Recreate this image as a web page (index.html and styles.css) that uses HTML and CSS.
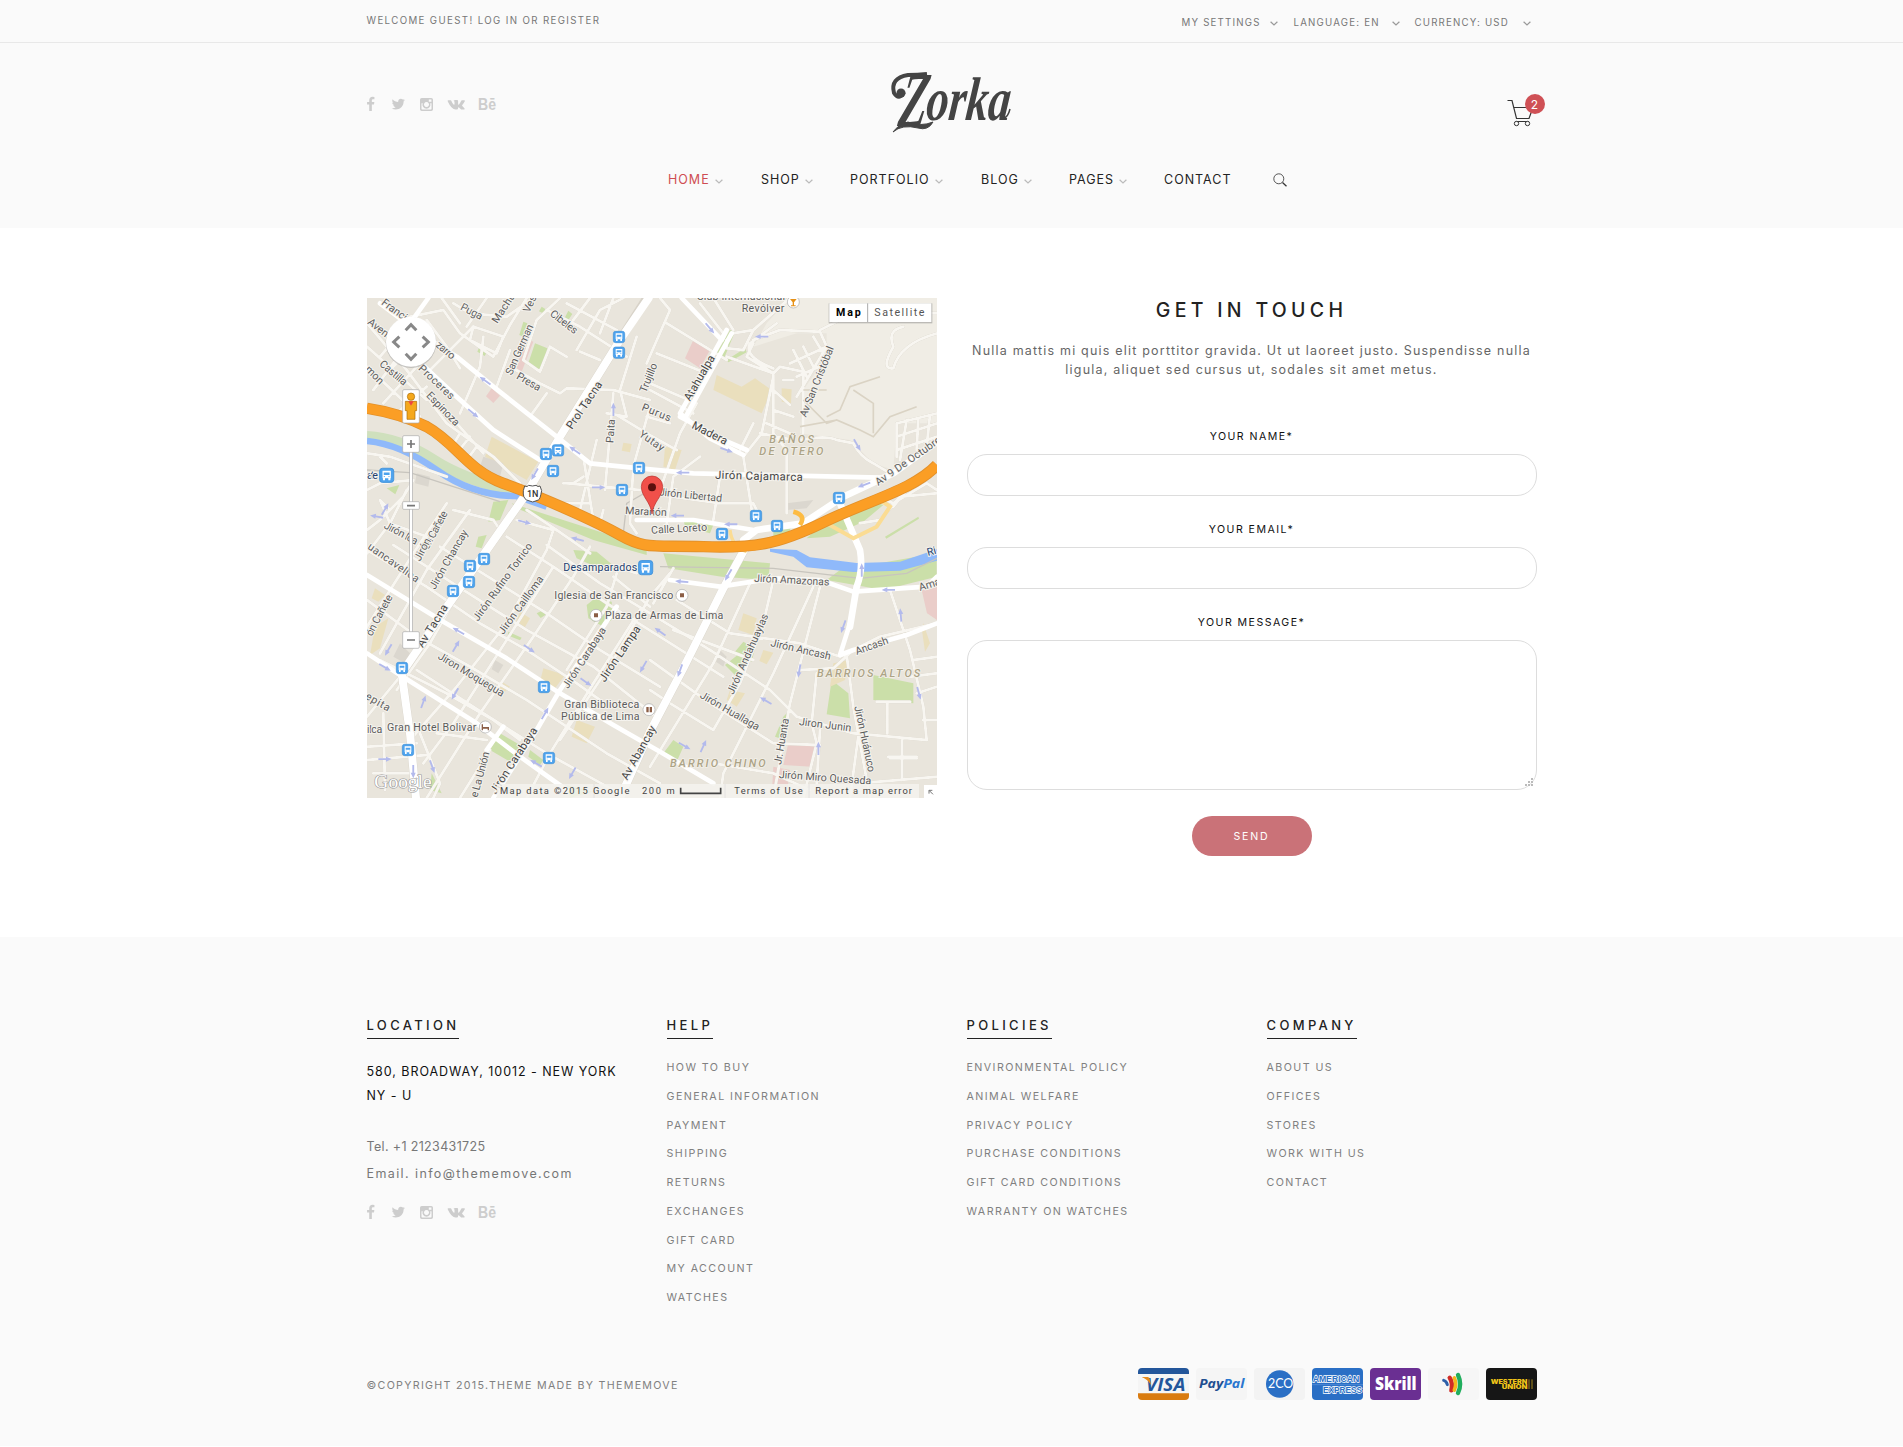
FILE: index.html
```html
<!DOCTYPE html>
<html lang="en">
<head>
<meta charset="utf-8">
<title>Zorka - Contact</title>
<link rel="stylesheet" href="styles.css">
</head>
<body>
<svg class="defs" width="0" height="0" aria-hidden="true">
  <defs>
    <symbol id="chev" viewBox="0 0 8 5"><path d="M.6.7 4 4 7.4.7" fill="none" stroke="currentColor" stroke-width="1.200"/></symbol>
    <symbol id="social" viewBox="0 0 130 16">
      <path transform="translate(-4 .8) scale(.0085)" d="M1343 12v264h-157q-86 0-116 36t-30 108v189h293l-39 296h-254v759h-306v-759h-255v-296h255v-218q0-186 104-288.5t277-102.5q147 0 228 12z"/>
      <path transform="translate(23.800 .6) scale(.0084)" d="M1684 408q-67 98-162 167 1 14 1 42 0 130-38 259.5t-115.5 248.5-184.5 210.5-258 146-323 54.5q-271 0-496-145 35 4 78 4 225 0 401-138-105-2-188-64.5t-114-159.5q33 5 61 5 43 0 85-11-112-23-185.500-111.500t-73.500-205.500v-4q68 38 146 41-66-44-105-115t-39-154q0-88 44-163 121 149 294.500 238.500t371.500 99.500q-8-38-8-74 0-134 94.500-228.500t228.500-94.500q140 0 236 102 109-21 205-78-37 115-142 178 93-10 186-50z"/>
      <path fill-rule="evenodd" d="M54.700 2h9.600q1.700 0 1.700 1.700v9.600q0 1.700-1.700 1.700h-9.600q-1.700 0-1.700-1.700V3.700Q53 2 54.700 2zM54.500 7.300v5.500q0 .7.700.7h8.600q.7 0 .7-.7V7.300h-1.300a4 4 0 1 1-7.500 0zM59.500 6a2.500 2.500 0 1 0 .01 0zM61.800 3.500v2.200h2.600V3.500z"/>
      <path d="M81 4.300h2.700q.5 0 .7.600 1.200 3 2.400 3.900.7.300.7-.7V6q0-1-.9-1.200.5-.8 1.800-.8h1.700q1 0 1 1v3.100q.2.900.9.300 1.300-1.400 2.100-3.400.2-.7.900-.7h2.200q1 0 .6.900-.8 1.800-2.500 3.700-.5.600 0 1.100l2.100 2.200q1 1.200-.6 1.300h-2.100q-.6 0-1.100-.5l-1.600-1.600q-.9-.6-.9.700 0 1.300-.9 1.400h-1.500q-4.300-.2-7.900-8.100-.3-1 .2-1.100z"/>
      <text x="111" y="13.500" class="be" textLength="18" lengthAdjust="spacingAndGlyphs">Bē</text>
    </symbol>
    <g id="bus"><rect x="-17" y="-17" width="34" height="34" rx="7" fill="#4ea3ee" stroke="#3d8fd8" stroke-width="2"/><path d="M-10-11h20v18h-20zM-9 7h5v5h-5zM4 7h5v5h-5z" fill="#fff"/><path d="M-7-7H7v6H-7zM-7 2h3v2h-3zM4 2h3v2H4z" fill="#4ea3ee"/></g>
    <path id="arr" d="M-20-2.500H3V-7L20 0 3 8V3H-20z" fill="#b3baec"/>
  </defs>
</svg>

<div class="topbar">
  <div class="container topbar-row">
    <div class="welcome">WELCOME GUEST! LOG IN OR REGISTER</div>
    <div class="settings">
      <span>MY SETTINGS</span><svg><use href="#chev"/></svg>
      <span>LANGUAGE: EN</span><svg><use href="#chev"/></svg>
      <span>CURRENCY: USD</span><svg><use href="#chev"/></svg>
    </div>
  </div>
</div>

<header class="header">
  <div class="container header-row">
    <svg class="social"><use href="#social"/></svg>
    <svg class="logo" viewBox="0 0 124 64" aria-label="Zorka">
      <g class="logo-text">
        <text x="0" y="0" transform="translate(7 55) skewX(-9) scale(.58 1)" class="logo-z">Z</text>
        <text x="0" y="0" transform="translate(35 48.500) skewX(-6) scale(1 1.080)" class="logo-rest" textLength="84" lengthAdjust="spacingAndGlyphs">orka</text>
      </g>
      <path d="M14 21Q9 30 4 22 0 7 18 4 28 4 37 3" fill="none" stroke="#444" stroke-width="4"/>
      <circle cx="11" cy="22" r="4.500" fill="#444"/>
      <path d="M3 61Q9 53 18 51 31 56 43 51 38 60 28 57 12 53 3 61z" fill="#444" stroke="#444"/>
      <path d="M114 47q4-1 6-9" fill="none" stroke="#444" stroke-width="1.500"/>
    </svg>
    <div class="cart">
      <svg width="27" height="28" viewBox="0 0 27 28"><path d="M.5 1.500H5L9.500 19.500H22L26 8.500H6.500M9 22.500h13" fill="none" stroke="#333" stroke-width="1.200"/><circle cx="9.500" cy="24.500" r="2.200" fill="#fafafa" stroke="#333"/><circle cx="20.500" cy="24.500" r="2.200" fill="#fafafa" stroke="#333"/></svg>
      <span class="badge">2</span>
    </div>
  </div>
  <nav class="nav">
    <a class="active">HOME<svg><use href="#chev"/></svg></a>
    <a>SHOP<svg><use href="#chev"/></svg></a>
    <a>PORTFOLIO<svg><use href="#chev"/></svg></a>
    <a>BLOG<svg><use href="#chev"/></svg></a>
    <a>PAGES<svg><use href="#chev"/></svg></a>
    <a>CONTACT</a>
    <svg class="search" viewBox="0 0 14 14"><circle cx="5.800" cy="5.800" r="5" fill="none" stroke="#555"/><path d="m9.500 9.500 4 3.700" stroke="#333" stroke-width="1.300"/></svg>
  </nav>
</header>

<main class="container main">
  <svg class="map" viewBox="21 24 1710 1500">
    <rect x="21" y="24" width="1710" height="1500" fill="#e9e5dc"/>
    <path d="M1290 24H1731V400L1610 400 1600 540 1540 520 1470 450 1320 430 1330 300 1400 200 1400 130 1310 130 1180 170 1220 100z" fill="#f0ede5"/>
    <g fill="#cbdfa9">
      <path d="M525 160 562 175 545 245 503 225zM360 165 384 180 374 198 352 185zM490 95l12 5-12 40-12-5zM625 62l12 10-12 18-10-8zM545 50l12 8-8 12-12-6zM80 595l38-10-12 28zM400 635 445 630 420 690 385 695zM355 740l25-5-15 40-18-5z"/>
      <path d="M455 640 640 700 860 770 860 795 700 750 470 655zM910 790l320 30-5 50-140-10-160-25zM1440 840l290-50v70l-160 40-170-30zM640 780l70 5 60 50-30 10-90-40z"/>
      <path d="M680 945l25-20 50 10 5 50-30 25-45-25zM420 1330l60 35-30 50-60-35zM1125 1085l25-30 35 20-10 40zM1095 1125l50-40 20 30-35 45zM1540 1155l120 25v60l-120-10zM1415 1170l50 40 5 75-70-12zM1270 1280l10-10-5 80-30-10zM940 1350l30 20-20 45-40-25z"/>
      <path d="M1110 120 1125 125 1090 210 1070 190zM1100 210l55-35 5 12-55 30zM1240 715l60-20-20 50-40 5zM970 685l90 20-10 25-75-20zM1400 690l80-30 60-25 30 10-60 50-100 45-70 5zM1575 740l100-60 2 6-98 60zM620 1485l80 20-70 19zM510 1380l40 30-10 15-35-25zM215 1450l30 60-35-10zM530 970l15-8 12 12-15 10zM445 1025l40 18-5 8-37-15z"/>
    </g>
    <g fill="#eacdc9"><path d="M495 145 520 155 485 245 470 235zM395 295l25 22-20 22-22-20zM1000 150l50 30-30 55-45-30zM1285 1360l80 10-10 60-85-5zM1240 1430l50 10-8 60-45-15zM1685 900l46-10v100l-30-20z"/></g>
    <g fill="#eadfbd"><path d="M395 440 535 515 500 570 375 500zM1070 255 1145 290 1185 265 1235 300 1205 370 1060 300zM790 458l25 4-5 25-25-5zM915 470l50 10-20 60-35-10zM1265 295l30 3-2 42-28-5zM45 1010l40-25-25 90-30 20zM480 965l30 20-20 35-25-18zM550 1135l65 20-30 40-45-20zM650 1290l55 20-25 50-45-20zM1150 970l40 15-10 50-45-15zM1210 1080l30 8-20 35-22-10zM1110 1200l45 10-25 40-30-20zM1420 1120l45-10-10 60-45 20zM425 1175l25 15-15 15-20-10zM45 895l30 20-20 20-20-10zM1690 1000l20 60-15 25-10-70z"/></g>
    <g fill="#dbd7cf"><path d="M370 500 430 520 420 560 360 530zM170 550l40 10-5 30-40-10zM120 1060l30 30-15 30-35-20zM405 1110l25 15-15 25-20-12zM1080 1080l20 20-10 30-22-15zM1280 640l80-10-20 25-60 5z"/></g>
    <path d="M21 440Q120 445 220 510T480 605" fill="none" stroke="#cfe0bd" stroke-width="34"/>
    <path d="M21 453Q120 462 230 540T470 618L560 650" fill="none" stroke="#8fb9fa" stroke-width="20"/>
    <path d="M1230 776 1310 780 1350 802 1490 819 1620 815 1731 778V812L1620 842 1480 846 1340 832 1300 800 1230 785z" fill="#8fb9fa"/>
    <path d="M21 540 150 548 280 590 420 635M900 830 1030 832 1240 835 1500 865 1640 850 1731 805M790 730 800 640 870 600" fill="none" stroke="#c8c5be" stroke-width="4"/>

    <g class="minor-edge">
      <path d="M200 90 260 170 300 235M150 80 250 60 300 130 400 200 450 105 500 24M280 40 330 70 440 80 520 24M340 110 430 140 410 190 330 150zM380 24 320 110M245 24 300 100M450 180 410 290M450 230 540 280 600 310 620 295 760 300 870 330M560 310 510 380M600 24 530 90 490 210 540 245 570 170 620 200M560 60 660 110 800 200M640 90 690 24M720 130 760 24M660 185 720 210M650 180 720 60 790 24M620 40 770 120M830 140 780 300 800 380 740 370M760 310 735 600M870 350 820 530 810 700 830 730M770 375 860 430 950 480M870 300 1000 370M620 580 730 590 840 600 900 600M710 450 660 660M730 660 720 700 780 720M670 500 700 690 M670 560 640 580 610 580 M690 640 610 640"/>
      <path d="M900 24 930 60 860 220M920 100 1100 210M890 190 1040 250M870 280 1010 340 960 430 900 600M860 380 930 400M1120 130 1180 120 1150 180 1100 175 1100 150M1060 24 1120 120M1020 40 1090 130M1100 200 1240 250 1260 230 1330 245 1330 430M1180 160 1160 200 1240 250 1240 430 1280 480 1280 670M1270 270 1300 270M1290 24 1180 120M1250 100 1170 160Q1150 200 1240 235M1180 150 1260 120 1380 125 1400 170 1310 320M1380 120 1480 70 1731 70M1240 360 1300 380M1220 400 1290 430M1200 430 1300 450M1240 300 1290 345M1240 260 1205 430 1150 500 1180 690M1300 180 1340 260M1330 170 1360 230M1360 140 1390 190M1290 220 1400 170M1310 260 1400 220M1180 400 1140 480M1020 500 940 560 920 700M1080 560 1060 690M940 620 1080 640 1180 640 1200 680"/>
      <path d="M1630 110Q1580 120 1600 170 1560 240 1600 235 1620 160 1731 130M1320 450Q1400 435 1430 450L1480 460Q1500 500 1540 520L1590 550M1610 400 1731 370M1610 440 1731 400M1610 480 1731 440M1640 390 1620 510M1675 385 1670 480M1710 375 1700 470M1610 400 1610 500M1560 620 1600 640 1700 580 1731 600M1500 700 1560 690 1620 620 1731 610M1640 600 1600 650"/>
      <path d="M21 100 140 240 260 400 400 500 480 580M21 170 200 330M21 230 180 380M40 300 130 180M70 340 170 230M110 370 200 290M60 200 110 140M100 230 150 180M290 400 370 490M300 430 270 480M330 440 290 490M350 470 320 510M200 250 340 110M370 140 360 230 300 370M21 490 90 500 260 560M60 500 80 520M21 600 60 580 160 570 130 620 60 690 21 720M90 660 60 630 90 700 200 740M140 600 90 700 21 790M280 660 400 690 420 720 300 900 210 1060 110 1200M260 640 160 790 21 1010M330 660 200 840 60 1090M470 690 580 720 560 780 440 1000 290 1190 150 1350M500 660 590 720"/>
      <path d="M21 780 200 890 360 1000 500 1080 650 1180 720 1230M100 765 310 900 500 1020 700 1130 900 1290M240 770 400 870 560 970 720 1080 900 1190M21 930 170 1040 330 1130 500 1230 740 1390 900 1480M60 1110 260 1210 400 1290 480 1350M170 1140 370 1270 560 1390 760 1500M440 740 580 830 740 940 900 1040 1090 1160M560 765 720 880 870 970 1050 1080M690 770 640 860 520 1040 360 1270 200 1524M580 830 440 1050 280 1300 190 1420M840 960 700 1180 570 1390 500 1524M770 850 740 950 620 1140M690 790 590 720M830 850 770 830"/>
      <path d="M930 850 870 920 760 1110 600 1350M940 835 880 940M1170 880 1060 1120 870 1430M1240 870 1210 1000 1140 1180 1060 1320M1360 890 1240 1150 1090 1450 1080 1524M1380 890 1290 1240 1240 1524M1370 1150 1355 1300 1370 1360 1330 1524M950 930 1110 1030 1320 1060 1440 1100 1560 1040 1731 1000M1320 1140 1420 1135 1480 1080M940 1020 1180 1110M870 1110 1050 1240 1240 1360 1380 1365M1050 1080 1230 1200 1310 1280 1480 1330 1700 1350M1060 1320 930 1240 870 1200M1590 900 1650 1080 1690 1250 1700 1350M1660 1110 1731 1100M1670 1210 1731 1190M1690 1290 1731 1290M1550 1235H1650M1582 1240V1330M1585 1400H1670M1626 1350V1470M1590 1405h80M1060 1420 1240 1450 1350 1500M1500 1480 1731 1460M1380 1320 1370 1480M1500 1300 1470 1524M1460 1095 1480 1250 1530 1524M21 1370 170 1360M21 1410 200 1395M70 1270 75 1500M180 1330 240 1480 220 1524M40 1450H160M230 1330 380 1350M21 1280 120 1160M300 1524 390 1380M870 950 760 860M1731 1150 1650 1160"/>
    </g>
    <path d="M1400 380 1440 360 1470 290 1560 260M1330 330 1400 400 1430 390 1500 420 1540 440 1590 380 1670 350M1480 300 1540 340 1540 430M1430 390 1320 410M1400 300 1330 300" fill="none" stroke="#dad3c4" stroke-width="5"/>
    <g fill="none" stroke="#d8d3c9" stroke-width="26" stroke-linejoin="round"><path d="M860 24 780 150 600 440 500 610 240 980 125 1150 150 1330 168 1524M1155 775 1090 895 970 1135 870 1325 780 1524"/></g>
    <g class="major">
      <path stroke-width="24" d="M866 24 780 150 600 440 500 610 240 980 125 1150 150 1330 168 1524M1155 775 1090 895 970 1135 870 1325 780 1524"/>
      <path stroke-width="20" d="M1440 640 1500 780Q1510 840 1490 890L1470 1010M1150 750 1190 720 1330 700 1450 620 1600 550 1731 455"/>
      <path stroke-width="14" d="M205 24 150 100M60 40 180 130 290 200 400 290 590 440 690 520 870 538 1000 550 1560 563M150 190 290 320 400 420 540 510M965 24 1085 150 1100 120 960 370 1050 445 1150 495M1115 130 980 375M960 380 1090 450 1160 480M21 855 250 995 440 1105 600 1210 760 1305 900 1385 1060 1480M21 1090 120 1155 350 1300 480 1400 620 1500M770 950 600 1200 530 1320 400 1524M380 1380 430 1310M930 870 1080 890 1240 865 1380 870 1480 905 1700 890 1731 860M1470 1000 1440 1095 1480 1080 1640 1035 1731 1000M830 690 1000 690 1180 720"/>
    </g>
    <path d="M1560 630Q1480 640 1400 700L1480 745 1550 710 1590 650z" fill="none" stroke="#fbdc93" stroke-width="12"/>
    <path d="M1110 720Q1115 770 1160 785" fill="none" stroke="#fbdc93" stroke-width="10"/>
    <path d="M1300 665Q1340 675 1320 705" fill="none" stroke="#fdbb42" stroke-width="14"/>
    <path d="M21 355Q120 370 200 410C290 460 320 540 430 580S700 690 780 735 880 765 1030 770 1250 765 1390 697 1660 600 1731 525" fill="none" stroke="#e2902a" stroke-width="34"/>
    <path d="M21 355Q120 370 200 410C290 460 320 540 430 580S700 690 780 735 880 765 1030 770 1250 765 1390 697 1660 600 1731 525" fill="none" stroke="#fb9e25" stroke-width="29"/>
    <g>
      <use href="#arr" transform="translate(375 272) rotate(215)"/><use href="#arr" transform="translate(340 370) rotate(40)"/><use href="#arr" transform="translate(524 553) rotate(120)"/><use href="#arr" transform="translate(644 481) rotate(215)"/><use href="#arr" transform="translate(760 358) rotate(-90)"/><use href="#arr" transform="translate(716 592)"/><use href="#arr" transform="translate(494 696) rotate(15)"/><use href="#arr" transform="translate(652 748) rotate(195)"/><use href="#arr" transform="translate(1050 115) rotate(50)"/><use href="#arr" transform="translate(1205 140) rotate(180)"/><use href="#arr" transform="translate(1100 480) rotate(20)"/><use href="#arr" transform="translate(968 548) rotate(180)"/><use href="#arr" transform="translate(1492 465) rotate(60)"/><use href="#arr" transform="translate(1512 585) rotate(160)"/><use href="#arr" transform="translate(952 677) rotate(180)"/><use href="#arr" transform="translate(1112 703) rotate(180)"/><use href="#arr" transform="translate(295 1023) rotate(210)"/><use href="#arr" transform="translate(288 1068) rotate(-60)"/><use href="#arr" transform="translate(508 1076) rotate(35)"/><use href="#arr" transform="translate(85 1080) rotate(120)"/><use href="#arr" transform="translate(75 1132) rotate(30)"/><use href="#arr" transform="translate(285 1212) rotate(120)"/><use href="#arr" transform="translate(190 1235) rotate(-70)"/><use href="#arr" transform="translate(555 1270) rotate(-60)"/><use href="#arr" transform="translate(678 1176) rotate(35)"/><use href="#arr" transform="translate(850 1130) rotate(120)"/><use href="#arr" transform="translate(1105 855) rotate(120)"/><use href="#arr" transform="translate(965 875) rotate(185)"/><use href="#arr" transform="translate(1505 840) rotate(-90)"/><use href="#arr" transform="translate(1585 900) rotate(180)"/><use href="#arr" transform="translate(1450 1010) rotate(110)"/><use href="#arr" transform="translate(1318 1143) rotate(100)"/><use href="#arr" transform="translate(1217 1232) rotate(210)"/><use href="#arr" transform="translate(960 1142) rotate(110)"/><use href="#arr" transform="translate(900 1025) rotate(215)"/><use href="#arr" transform="translate(1375 1375) rotate(-90)"/><use href="#arr" transform="translate(1622 975) rotate(-95)"/><use href="#arr" transform="translate(1677 1210) rotate(75)"/><use href="#arr" transform="translate(974 1368) rotate(30)"/><use href="#arr" transform="translate(1030 1368) rotate(-65)"/><use href="#arr" transform="translate(75 1407)"/><use href="#arr" transform="translate(160 1445) rotate(90)"/><use href="#arr" transform="translate(217 1430) rotate(70)"/><use href="#arr" transform="translate(528 1420) rotate(210)"/><use href="#arr" transform="translate(637 1450) rotate(120)"/><use href="#arr" transform="translate(75 657) rotate(-60)"/><use href="#arr" transform="translate(50 680) rotate(190)"/>
    </g>
    <g class="lbl">
      <text transform="translate(62 42) rotate(36)">Francisco</text><text transform="translate(21 100) rotate(38)">Avenida</text>
      <text transform="translate(173 238) rotate(43)" textLength="135">Proceres</text><text transform="translate(225 168) rotate(40)" textLength="65">zarro</text>
      <text transform="translate(56 225) rotate(40)" textLength="98">Castilla</text><text transform="translate(14 240) rotate(45)" textLength="64">mon</text>
      <text transform="translate(197 318) rotate(46)" textLength="128">Espinoza</text><text transform="translate(299 58) rotate(27)" textLength="70">Puga</text>
      <text transform="translate(412 102) rotate(-57)" textLength="100">Machu</text><text transform="translate(508 70) rotate(-65)">Ves</text>
      <text transform="translate(455 257) rotate(-66)" textLength="162">San German</text><text transform="translate(568 75) rotate(38)" textLength="95">Cibeles</text>
      <text transform="translate(467 265) rotate(30)" textLength="78">Presa</text><text class="big" transform="translate(636 420) rotate(-56)" textLength="165">Prol Tacna</text>
      <text transform="translate(760 460) rotate(-86)" textLength="72">Paita</text><text transform="translate(858 310) rotate(-68)" textLength="92">Trujillo</text>
      <text transform="translate(835 437) rotate(35)" textLength="84">Yutay</text><text transform="translate(843 360) rotate(22)" textLength="92">Purus</text>
      <text class="big" transform="translate(990 335) rotate(-60)" textLength="152">Atahualpa</text><text class="big" transform="translate(993 413) rotate(27)" textLength="115">Madera</text>
      <text class="big" transform="translate(1065 566) rotate(1.500)" textLength="263">Jirón Cajamarca</text><text transform="translate(896 616) rotate(6)" textLength="190">Jirón Libertad</text>
      <text transform="translate(795 672) rotate(3)" textLength="125">Marañón</text><text transform="translate(874 731) rotate(-3)" textLength="168">Calle Loreto</text>
      <text transform="translate(1338 383) rotate(-68)" textLength="225">Av San Cristóbal</text><text transform="translate(1555 588) rotate(-35)" textLength="232">Av 9 De Octubre</text>
      <text x="1145" y="65" textLength="128">Revólver</text><text x="1010" y="29" textLength="265">Club Internacional</text>
      <text transform="translate(70 713) rotate(28)" textLength="110">Jirón Ica</text><text transform="translate(205 780) rotate(-62)" textLength="125">ón Cañete</text>
      <text transform="translate(21 775) rotate(35)" textLength="180">uancavelica</text><text transform="translate(225 900) rotate(-60)" textLength="200">Jirón Chancay</text>
      <text transform="translate(180 815) rotate(-62)">Jirón</text><text transform="translate(354 995) rotate(-54)" textLength="280">Jirón Rufino Torrico</text><text transform="translate(430 1035) rotate(-54)" textLength="207">Jirón Cailloma</text>
      <text transform="translate(35 1040) rotate(-62)" textLength="135">ón Cañete</text><text class="big" transform="translate(188 1075) rotate(-58)" textLength="145">Av Tacna</text>
      <text transform="translate(232 1105) rotate(31)" textLength="225">Jiron Moquegua</text><text transform="translate(624 1198) rotate(-57)" textLength="212">Jirón Carabaya</text>
      <text class="big" transform="translate(734 1178) rotate(-56)" textLength="195">Jirón Lampa</text><text transform="translate(14 1225) rotate(30)" textLength="80">epita</text>
      <text x="21" y="1329" textLength="46">ilca</text><text x="81" y="1322" textLength="268">Gran Hotel Bolivar</text>
      <text x="583" y="926" textLength="357">Iglesia de San Francisco</text><text x="735" y="986" textLength="355">Plaza de Armas de Lima</text>
      <text x="612" y="1254" textLength="226">Gran Biblioteca</text><text x="603" y="1290" textLength="236">Pública de Lima</text>
      <text class="big" transform="translate(408 1514) rotate(-57)" textLength="230">Jirón Carabaya</text><text transform="translate(352 1524) rotate(-75)" textLength="140">e La Unión</text>
      <text class="big" transform="translate(802 1472) rotate(-61)" textLength="180">Av Abancay</text><text transform="translate(1182 875) rotate(3)" textLength="226">Jirón Amazonas</text>
      <text transform="translate(1120 1215) rotate(-66)" textLength="260">Jirón Andahuaylas</text><text transform="translate(1230 1068) rotate(13)" textLength="185">Jirón Ancash</text>
      <text transform="translate(1490 1095) rotate(-20)" textLength="103">Ancash</text><text transform="translate(1018 1222) rotate(30)" textLength="200">Jirón Huallaga</text>
      <text transform="translate(1316 1305) rotate(7)" textLength="158">Jiron Junin</text><text transform="translate(1263 1425) rotate(-80)" textLength="140">Jr. Huanta</text>
      <text transform="translate(1483 1250) rotate(78)" textLength="202">Jirón Huánuco</text><text transform="translate(1256 1464) rotate(4)" textLength="278">Jirón Miro Quesada</text>
      <text transform="translate(1680 903) rotate(-17)">Ama</text>
      <text x="21" y="567" textLength="33" class="navy">ate</text><text x="610" y="842" textLength="222" class="navy">Desamparados</text><text transform="translate(1704 798) rotate(-15)" class="navy">Ri</text>
    </g>
    <g class="district"><text x="1228" y="458" textLength="134">BAÑOS</text><text x="1198" y="495" textLength="192">DE OTERO</text><text x="1371" y="1161" textLength="310">BARRIOS ALTOS</text><text x="930" y="1431" textLength="287">BARRIO CHINO</text></g>
    <g><use href="#bus" x="777" y="141"/><use href="#bus" x="777" y="188"/><use href="#bus" x="558" y="492"/><use href="#bus" x="594" y="481"/><use href="#bus" x="579" y="543"/><use href="#bus" x="837" y="534"/><use href="#bus" x="786" y="600"/><use href="#bus" x="1437" y="624"/><use href="#bus" x="1188" y="678"/><use href="#bus" x="1251" y="708"/><use href="#bus" x="1086" y="732"/><use href="#bus" x="372" y="807"/><use href="#bus" x="330" y="828"/><use href="#bus" x="327" y="876"/><use href="#bus" x="279" y="903"/><use href="#bus" x="126" y="1134"/><use href="#bus" x="552" y="1191"/><use href="#bus" x="144" y="1380"/><use href="#bus" x="567" y="1404"/><use href="#bus" transform="translate(80 556) scale(1.250)"/><use href="#bus" transform="translate(857 833) scale(1.250)"/></g>
    <g fill="#fff" stroke="#aaa" stroke-width="2"><circle cx="708" cy="976" r="18"/><circle cx="966" cy="916" r="18"/><circle cx="867" cy="1259" r="18"/><circle cx="376" cy="1311" r="18"/><circle cx="1300" cy="36" r="18"/></g>
    <path d="M702 970h12v12h-12zM960 910h12v12h-12zM859 1251h7v16h-7zM869 1251h7v16h-7zM365 1303h4v8h18v10h-4v-5h-14v5h-4z" fill="#8b5e46"/><path d="M1290 27h20l-8 10v9h5v3h-14v-3h5v-9z" fill="#e69117"/>
    <path d="M494 588q8 4 12-2 12 4 22 0 6 6 12 2l5 14q-5 28-10 28l-17 6-18-6q-12-6-10-28z" fill="#fff" stroke="#555" stroke-width="3"/><text x="501" y="620" class="shield">1N</text>
    <path d="M876 672C872 635 844 620 844 590A32 32 0 0 1 908 590C908 620 880 635 876 672z" fill="#f0504a" stroke="#b5302c" stroke-width="2"/><circle cx="876" cy="592" r="12" fill="#5c100e"/>

    <circle cx="153" cy="158" r="76" fill="#999" opacity=".5"/><circle cx="153" cy="155" r="75" fill="#fff"/>
    <path d="M137 121 153 104 169 121M137 191 153 208 169 191M118 140 101 156 118 172M188 140 205 156 188 172" fill="none" stroke="#888" stroke-width="9"/>
    <g fill="#fff" stroke="#aaa" stroke-width="2"><rect x="149" y="480" width="9" height="550"/><rect x="128" y="299" width="50" height="100" rx="4"/><rect x="128" y="437" width="50" height="50" rx="4"/><rect x="128" y="635" width="50" height="23" rx="3"/><rect x="128" y="1025" width="50" height="50" rx="4"/></g>
    <circle cx="153" cy="320" r="11" fill="#f5a81c" stroke="#a66b0b" stroke-width="2"/><path d="M136 334h34v28h-5v26h-24v-26h-5z" fill="#f5a81c" stroke="#a66b0b" stroke-width="2"/><path d="M145 334h16l-8 13z" fill="#e44"/>
    <path d="M141 462h24M153 450v24M141 647h24M141 1050h24" stroke="#777" stroke-width="5"/>
    <rect x="1406" y="40" width="311" height="60" fill="#888" opacity=".5"/><rect x="1408" y="40" width="306" height="56" fill="#fff"/><path d="M1523 40v56" stroke="#aaa" stroke-width="3"/>
    <g class="ui"><text x="1428" y="78" class="on" textLength="74">Map</text><text x="1543" y="78" textLength="150">Satellite</text></g>
    <path d="M410 1482H1677V1524H410z" fill="#f5f3ef" opacity=".85"/><path d="M1692 1485h39v39h-39z" fill="#fff"/><path d="m1719 1513-12-12m0 10v-10h10" fill="none" stroke="#777" stroke-width="3"/>
    <path d="M702 1482v42M1095 1482v42M1347 1482v42" stroke="#ddd" stroke-width="2"/>
    <g class="ui small"><text x="420" y="1512" textLength="388">Map data ©2015 Google</text><text x="846" y="1512" textLength="98">200 m</text><text x="1123" y="1512" textLength="205">Terms of Use</text><text x="1366" y="1512" textLength="290">Report a map error</text></g>
    <path d="M962 1493v17h120v-17" fill="none" stroke="#444" stroke-width="5"/>
    <text x="43" y="1493" class="google" textLength="172" lengthAdjust="spacingAndGlyphs">Google</text>
  </svg>

  <section class="contact">
    <h1>GET IN TOUCH</h1>
    <p>Nulla mattis mi quis elit porttitor gravida. Ut ut laoreet justo. Suspendisse nulla<br>ligula, aliquet sed cursus ut, sodales sit amet metus.</p>
    <label>YOUR NAME*</label>
    <input type="text">
    <label>YOUR EMAIL*</label>
    <input type="text">
    <label>YOUR MESSAGE*</label>
    <div class="area"><svg width="9" height="9"><path d="M6 0h2v2H6zM3 3h2v2H3zM6 3h2v2H6zM0 6h2v2H0zM3 6h2v2H3zM6 6h2v2H6z" fill="#bbb"/></svg></div>
    <button>SEND</button>
  </section>
</main>

<footer class="footer">
  <div class="container cols">
    <div>
      <h2>LOCATION</h2>
      <p class="address">580, BROADWAY, 10012 - NEW YORK<br>NY - U</p>
      <p class="reach"><span class="tel">Tel. +1 2123431725</span><br>Email. info@thememove.com</p>
      <svg class="social"><use href="#social"/></svg>
    </div>
    <div>
      <h2>HELP</h2>
      <ul><li>HOW TO BUY</li><li>GENERAL INFORMATION</li><li>PAYMENT</li><li>SHIPPING</li><li>RETURNS</li><li>EXCHANGES</li><li>GIFT CARD</li><li>MY ACCOUNT</li><li>WATCHES</li></ul>
    </div>
    <div>
      <h2>POLICIES</h2>
      <ul><li>ENVIRONMENTAL POLICY</li><li>ANIMAL WELFARE</li><li>PRIVACY POLICY</li><li>PURCHASE CONDITIONS</li><li>GIFT CARD CONDITIONS</li><li>WARRANTY ON WATCHES</li></ul>
    </div>
    <div>
      <h2>COMPANY</h2>
      <ul><li>ABOUT US</li><li>OFFICES</li><li>STORES</li><li>WORK WITH US</li><li>CONTACT</li></ul>
    </div>
  </div>
  <div class="container bottom">
    <div class="copy">©COPYRIGHT 2015.THEME MADE BY THEMEMOVE</div>
    <div class="cards">
      <svg viewBox="0 0 153 96"><rect width="153" height="96" fill="#f5f5f5"/><path d="M0 0h153v18H0z" fill="#23569b"/><path d="M0 76h153v20H0z" fill="#d97b10"/><text x="24" y="68" class="visa" textLength="118" lengthAdjust="spacingAndGlyphs">VISA</text><path d="M11 27h18q6 0 7 8l3 16Q30 35 11 27z" fill="#e58a1c"/></svg>
      <svg viewBox="0 0 153 96"><rect width="153" height="96" fill="#f5f5f5"/><text x="9" y="59" class="paypal" textLength="136" lengthAdjust="spacingAndGlyphs"><tspan fill="#1f4f90">Pay</tspan><tspan fill="#2a76cf">Pal</tspan></text></svg>
      <svg viewBox="0 0 153 96"><rect width="153" height="96" fill="#f3f3f3"/><circle cx="77" cy="48" r="41" fill="#2a6fc5"/><text x="42" y="61" class="two" textLength="76" lengthAdjust="spacingAndGlyphs">2CO</text></svg>
      <svg viewBox="0 0 153 96"><rect width="153" height="96" fill="#2a6fc5"/><path d="M0 50h153" stroke="#5f96dc" stroke-width="2"/><g class="amex"><text x="2" y="43" textLength="140" lengthAdjust="spacingAndGlyphs">AMERICAN</text><text x="33" y="74" textLength="117" lengthAdjust="spacingAndGlyphs">EXPRESS</text></g></svg>
      <svg viewBox="0 0 153 96"><rect width="153" height="96" fill="#6a2f92"/><text x="15" y="67" class="skrill" textLength="125" lengthAdjust="spacingAndGlyphs">Skrill</text></svg>
      <svg viewBox="0 0 153 96"><rect width="153" height="96" fill="#f6f6f6"/><g fill="none" stroke-linecap="round" stroke-width="13"><path d="M47 37q8 2 11 13" stroke="#2e5fa8" stroke-width="9"/><path d="M65 29q10 14 5 38" stroke="#d02c27"/><path d="M79 30q8 17 0 36" stroke="#f4b71d" stroke-width="11"/><path d="M90 21q13 28 0 54" stroke="#21ae5e"/></g></svg>
      <svg viewBox="0 0 153 96"><rect width="153" height="96" fill="#161616"/><g class="wu"><text x="14" y="47" textLength="110" lengthAdjust="spacingAndGlyphs">WESTERN</text><text x="47" y="64" textLength="77" lengthAdjust="spacingAndGlyphs">UNION</text></g><path d="M129 34v29M138 34v29" stroke="#a3871d" stroke-width="3"/></svg>
    </div>
  </div>
</footer>
</body>
</html>
```
FILE: styles.css
```css
* { box-sizing: border-box; }
body { margin: 0; background: #fff; font-family: Inter, "Liberation Sans", sans-serif; color: #777; }
.defs { position: absolute; }
h1, h2, p, ul { margin: 0; padding: 0; font-weight: 400; }
.container { width: 1170px; margin: 0 auto; }

.topbar { height: 43px; background: #fafafa; border-bottom: 1px solid #e8e8e8; font-size: 9.7px; color: #777; }
.topbar-row { display: flex; justify-content: space-between; }
.welcome { line-height: 41px; letter-spacing: 1.37px; }
.settings { display: grid; grid-template-columns: 88px 24px 98px 23px 108px 14px; align-items: center; line-height: 45px; letter-spacing: 1.2px; white-space: nowrap; }
.settings svg { width: 8px; height: 5px; color: #999; margin-top: 1px; }

.header { height: 185px; background: #fafafa; }
.header-row { display: grid; grid-template-columns: 523px 124px 1fr; }
.social { display: block; width: 130px; height: 16px; fill: #cdcdcd; }
.header .social { margin-top: 53px; }
.be { font: bold 17px "Liberation Sans", sans-serif; }
.logo { width: 124px; height: 64px; margin-top: 28px; overflow: visible; }
.logo-text { fill: #444; font-family: "Liberation Serif", serif; font-style: italic; font-weight: bold; }
.logo-z { font-size: 78px; }
.logo-rest { font-size: 57px; }
.cart { position: relative; justify-self: end; width: 30px; margin: 56px 0 0; }
.badge { position: absolute; left: 18px; top: -5px; width: 20px; height: 20px; border-radius: 50%; background: #cf5055; color: #fff; font-size: 12px; line-height: 21px; text-align: center; }

.nav { display: grid; grid-template-columns: 93px 89px 131px 88px 95px 109px 14px; width: 671px; margin: 35px auto 0; padding-left: 52px; align-items: center; line-height: 20px; font-size: 12.5px; letter-spacing: 1px; color: #222; }
.nav a { display: flex; align-items: center; gap: 5px; }
.nav a svg { width: 8px; height: 5px; margin-top: 2px; color: #bbb; }
.nav .active { color: #cf4d52; }
.search { width: 14px; height: 14px; }

.main { display: grid; grid-template-columns: 570px 570px; gap: 30px; height: 709px; padding-top: 70px; }
.map { display: block; width: 570px; height: 500px; }
.minor-edge, .major { fill: none; stroke-linejoin: round; stroke-linecap: round; }
.minor-edge { stroke: #f8f6f1; stroke-width: 9; filter: drop-shadow(0 0 2px #c9c3b6); }
.major { stroke: #fff; }
.lbl { font-family: Roboto, sans-serif; font-size: 32px; fill: #5d5d5d; stroke: #f5f3ee; stroke-width: 6px; paint-order: stroke; }
.lbl .big { font-size: 34px; fill: #444; }
.lbl .navy { fill: #1d4170; }
.district { font: italic 500 33px Roboto, sans-serif; fill: #aca386; stroke: #f3f0e8; stroke-width: 5px; paint-order: stroke; }
.shield { font: 500 27px Roboto, sans-serif; fill: #333; }
.ui { font-family: Roboto, sans-serif; font-size: 32px; fill: #555; }
.ui .on { font-weight: 700; fill: #000; }
.small { font-size: 28px; fill: #444; }
.google { font: 54px "Liberation Serif", serif; fill: #fff; stroke: #999; stroke-width: 3.5px; paint-order: stroke; }

.contact { display: flex; flex-direction: column; align-items: center; text-align: center; }
.contact h1 { font-size: 19.5px; font-weight: 500; line-height: 24px; letter-spacing: 4.3px; color: #222; }
.contact p { margin: 19px 0 48px; font-size: 12.5px; line-height: 19px; letter-spacing: 1.2px; color: #666; white-space: nowrap; }
.contact label { height: 18px; line-height: 20px; margin-bottom: 9px; font-size: 10.6px; letter-spacing: 1.45px; color: #111; }
.contact input { width: 570px; height: 42px; margin: 0 0 24px; border: 1px solid #ddd; border-radius: 20px; background: #fff; }
.area { width: 570px; height: 150px; border: 1px solid #ddd; border-radius: 20px; display: flex; justify-content: flex-end; align-items: flex-end; padding: 2px; }
.contact button { width: 120px; height: 40px; margin-top: 26px; border: 0; border-radius: 20px; background: #ca7278; color: #fff; font: 10.6px Inter, sans-serif; letter-spacing: 1.8px; }

.footer { height: 509px; padding-top: 77px; background: #fafafa; }
.cols { display: grid; grid-template-columns: repeat(4, 300px); height: 354px; }
.footer h2 { width: fit-content; height: 25px; line-height: 22px; font-size: 13px; font-weight: 500; letter-spacing: 3.35px; color: #222; border-bottom: 1px solid #222; }
.address { margin-top: 21px; font-size: 12.5px; line-height: 24px; letter-spacing: .95px; color: #111; white-space: nowrap; }
.reach { margin: 25px 0 17px; font-size: 12.5px; line-height: 27px; letter-spacing: 1.4px; color: #777; }
.tel { letter-spacing: .35px; }
.footer ul { list-style: none; margin-top: 15px; font-size: 10.7px; line-height: 28.75px; letter-spacing: 1.42px; color: #808080; }
.bottom { display: flex; justify-content: space-between; }
.copy { margin-top: 7px; font-size: 10.7px; line-height: 22px; letter-spacing: 1.28px; color: #808080; }
.cards { display: flex; gap: 7px; }
.cards svg { width: 51px; height: 32px; border-radius: 4px; }
.visa { font: italic bold 52px "Open Sans", sans-serif; fill: #23569b; }
.paypal { font: italic bold 38px "Open Sans", sans-serif; }
.two { font: 38px Lato, sans-serif; fill: #fff; }
.amex { font: bold 27px "Liberation Sans", sans-serif; fill: #2a6fc5; stroke: #fff; stroke-width: 4px; paint-order: stroke; }
.skrill { font: 800 52px "Open Sans", sans-serif; fill: #fff; }
.wu { font: 900 19px Inter, sans-serif; fill: #f0c419; }
```
